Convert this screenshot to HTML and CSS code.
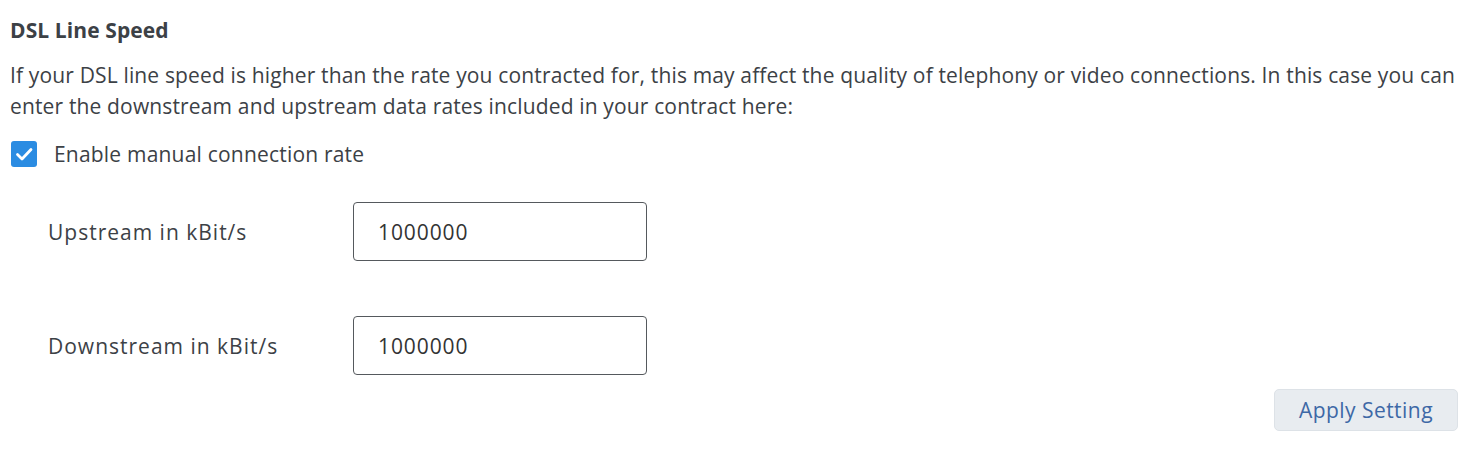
FILE: index.html
```html
<!DOCTYPE html>
<html>
<head>
<meta charset="utf-8">
<link rel="stylesheet" href="styles.css">
</head>
<body>
<div class="page">
  <h2 class="title">DSL Line Speed</h2>
  <p class="desc">If your DSL line speed is higher than the rate you contracted for, this may affect the quality of telephony or video connections. In this case you can enter the downstream and upstream data rates included in your contract here:</p>
  <label class="check">
    <span class="box"><svg width="26" height="26" viewBox="0 0 26 26"><path d="M6.5 13.5 L11 18 L20 8.5" fill="none" stroke="#fff" stroke-width="2.8" stroke-linecap="round" stroke-linejoin="round"/></svg></span>
    <span class="check-label">Enable manual connection rate</span>
  </label>
  <div class="rows">
    <div class="row">
      <span class="row-label">Upstream in kBit/s</span>
      <div class="input">1000000</div>
    </div>
    <div class="row">
      <span class="row-label">Downstream in kBit/s</span>
      <div class="input">1000000</div>
    </div>
  </div>
  <div class="actions">
    <button class="btn">Apply Setting</button>
  </div>
</div>
</body>
</html>
```

FILE: styles.css
```css
html, body {
  margin: 0;
  padding: 0;
  background: #fff;
}
body {
  font-family: "Open Sans", "Noto Sans", sans-serif;
  color: #3c4146;
}
.page {
  padding: 16px 16px 0 10px;
}
.title {
  margin: 0;
  font-size: 21px;
  font-weight: 700;
  line-height: 28px;
  letter-spacing: 0.1px;
  color: #3c4146;
}
.desc {
  margin: 16px 0 0 0;
  font-size: 21px;
  line-height: 31px;
  letter-spacing: 0.15px;
}
.check {
  display: flex;
  align-items: center;
  margin-top: 19px;
  margin-left: 1px;
}
.box {
  width: 26px;
  height: 26px;
  border-radius: 3px;
  background: #2b8ce2;
  display: flex;
}
.check-label {
  margin-left: 17px;
  font-size: 21px;
  line-height: 26px;
  letter-spacing: 0.2px;
}
.rows {
  margin-top: 35px;
  padding-left: 38px;
  display: flex;
  flex-direction: column;
  gap: 55px;
}
.row {
  display: flex;
  align-items: center;
}
.row-label {
  width: 305px;
  font-size: 21px;
  letter-spacing: 1px;
}
.input {
  width: 268px;
  height: 57px;
  border: 1px solid #55595d;
  border-radius: 4px;
  padding-left: 24px;
  display: flex;
  align-items: center;
  font-size: 21px;
  letter-spacing: 0.9px;
  color: #333;
}
.actions {
  display: flex;
  justify-content: flex-end;
  margin-top: 14px;
}
.btn {
  width: 184px;
  height: 42px;
  background: #e8ecf0;
  border: 1px solid #dde2e7;
  border-radius: 5px;
  font-family: "Open Sans", "Noto Sans", sans-serif;
  font-size: 21px;
  letter-spacing: 0.45px;
  color: #3d68a6;
  padding: 0;
}
```
